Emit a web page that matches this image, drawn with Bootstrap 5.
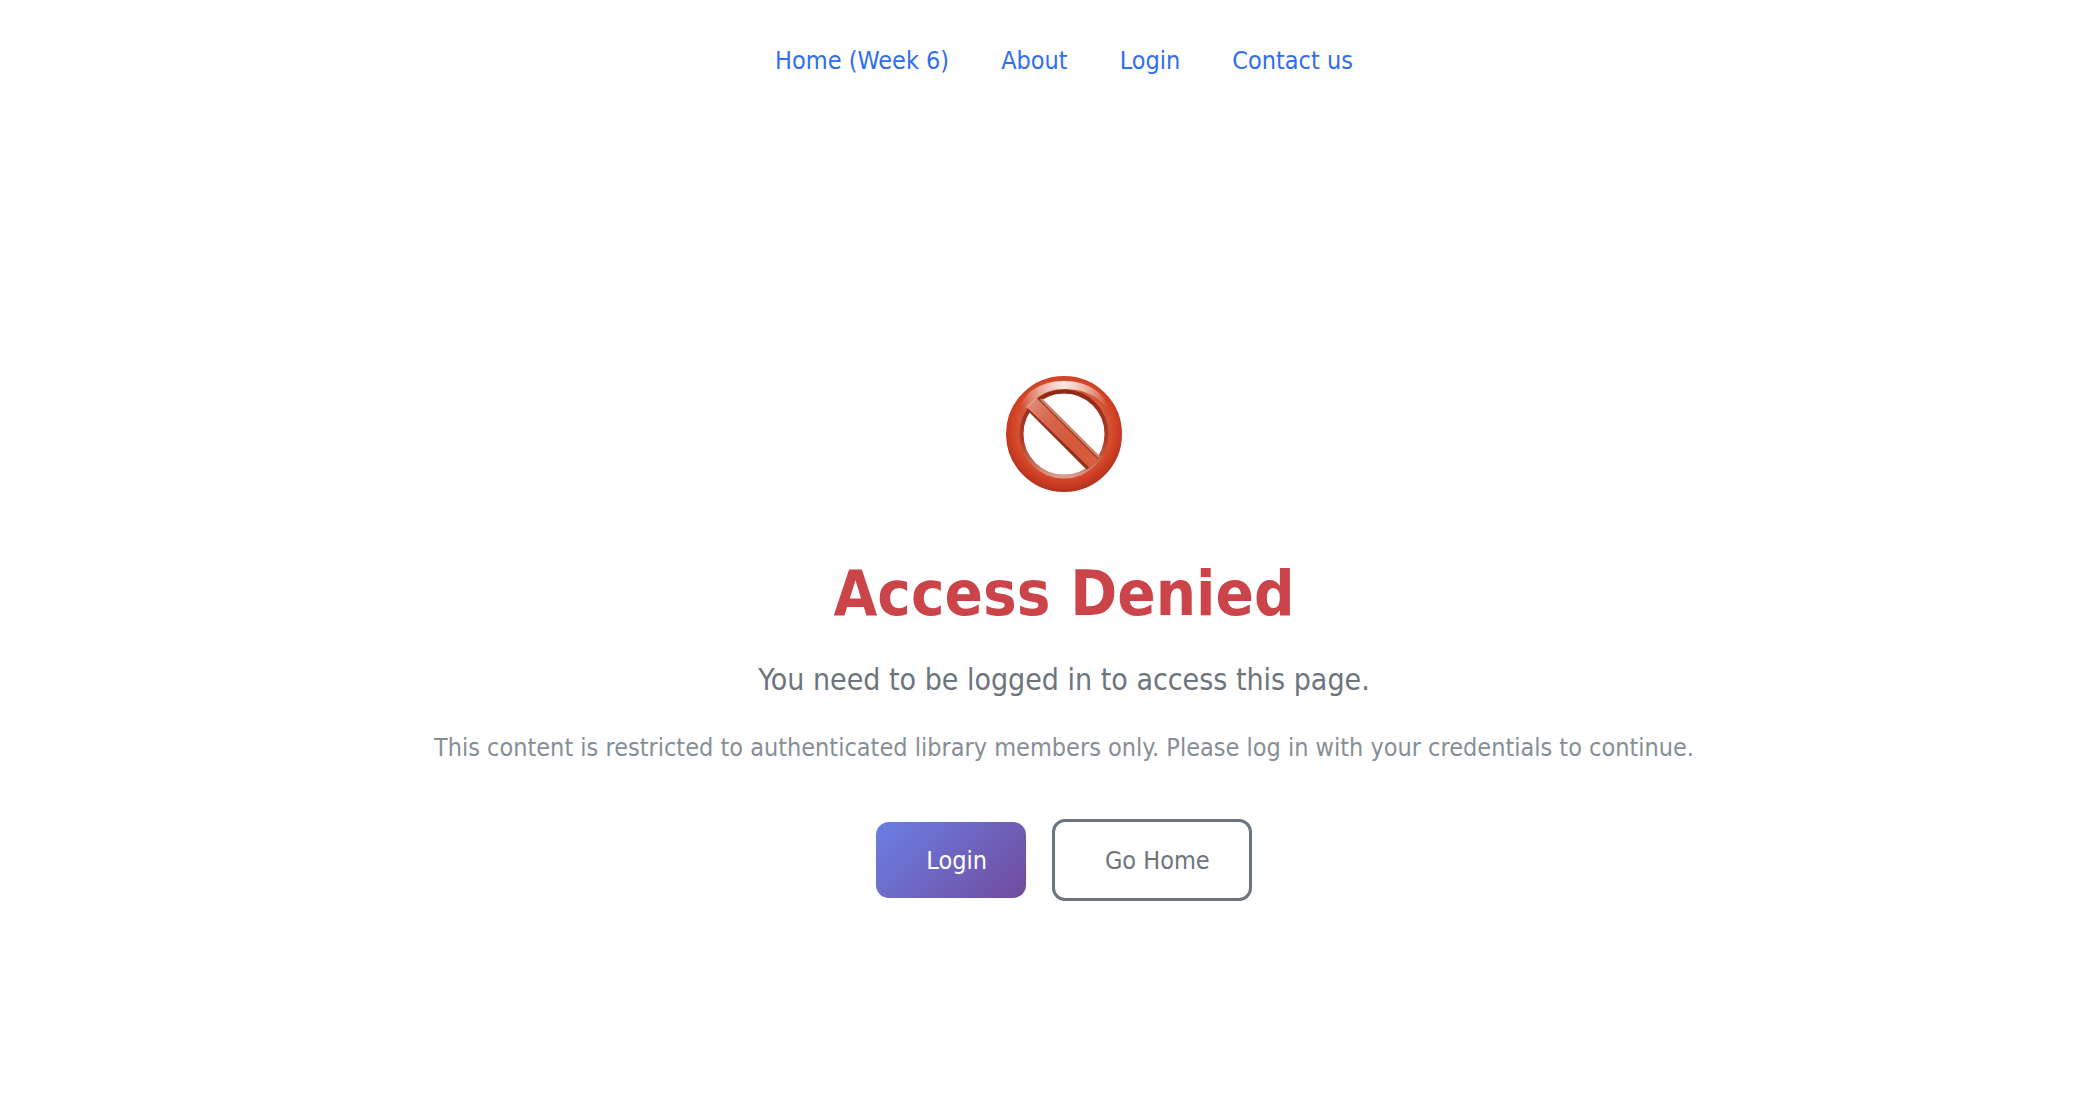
<!DOCTYPE html>
<html lang="en">
<head>
<meta charset="utf-8">
<meta name="viewport" content="width=device-width, initial-scale=1">
<title>Access Denied</title>
<link href="https://cdn.jsdelivr.net/npm/bootstrap@5.3.0/dist/css/bootstrap.min.css" rel="stylesheet">
<style>
  body {
    font-family: "DejaVu Sans Condensed", "DejaVu Sans", sans-serif;
    font-size: 25px;
    line-height: 40px;
    padding-left: 32px;
    background: #fff;
  }
  .site-nav { padding-top: 41px; }
  .site-nav .nav { column-gap: 52px; }
  .site-nav .nav-link { padding: 0; color: #2f6df2; }
  .denied { padding-top: 295px; }
  .denied-icon { width: 116px; height: 116px; }
  .denied-title {
    margin: 62px 0 26px;
    font-size: 63px;
    line-height: 80px;
    font-weight: 700;
    color: #cb444a;
  }
  .denied-lead { margin-bottom: 28px; font-size: 30px; color: #6c757d; }
  .denied-note { margin-bottom: 51px; color: #868e96; }
  .denied-actions { gap: 26px; }
  .denied-actions .btn {
    padding: 19px 39px 17px 50px;
    border: 0;
    border-radius: 13px;
    font-size: 25px;
    line-height: 40px;
  }
  .denied-actions .btn-login { color: #fff; background: linear-gradient(135deg, #6a7fe4, #714b9c); }
  .denied-actions .btn-home { border: 3px solid #6c757d; color: #6c757d; }
</style>
</head>
<body>
<header class="site-nav">
  <nav aria-label="Main">
    <ul class="nav justify-content-center">
      <li class="nav-item"><a class="nav-link" href="#home">Home (Week 6)</a></li>
      <li class="nav-item"><a class="nav-link" href="#about">About</a></li>
      <li class="nav-item"><a class="nav-link" href="#login">Login</a></li>
      <li class="nav-item"><a class="nav-link" href="#contact">Contact us</a></li>
    </ul>
  </nav>
</header>
<main class="denied text-center">
  <svg class="denied-icon d-block mx-auto" viewBox="-58 -58 116 116" aria-hidden="true">
    <defs>
      <radialGradient id="ring" gradientUnits="userSpaceOnUse" cx="0" cy="-5" r="65">
        <stop offset=".65" stop-color="#d55a3b"/><stop offset=".8" stop-color="#d34226"/><stop offset="1" stop-color="#ab2f1a"/>
      </radialGradient>
      <linearGradient id="bevel" x1="0" y1="0" x2="0" y2="1">
        <stop offset="0" stop-color="#8f2a16"/><stop offset=".6" stop-color="#b23f27"/><stop offset=".88" stop-color="#c9745f"/><stop offset="1" stop-color="#dc9e90"/>
      </linearGradient>
      <linearGradient id="slash" gradientUnits="userSpaceOnUse" x1="-34" y1="-34" x2="30" y2="30">
        <stop offset="0" stop-color="#e08d7a"/><stop offset=".3" stop-color="#d7664b"/><stop offset=".7" stop-color="#d4583a"/><stop offset="1" stop-color="#d95f40"/>
      </linearGradient>
      <radialGradient id="shine" gradientUnits="userSpaceOnUse" cx="0" cy="-52" r="50">
        <stop offset="0" stop-color="#fff" stop-opacity=".9"/><stop offset=".5" stop-color="#fff" stop-opacity=".52"/><stop offset="1" stop-color="#fff" stop-opacity="0"/>
      </radialGradient>
      <clipPath id="hole"><circle r="42"/></clipPath>
    </defs>
    <circle r="49.5" fill="none" stroke="url(#ring)" stroke-width="17"/>
    <circle r="42.5" fill="none" stroke="url(#bevel)" stroke-width="4"/>
    <g clip-path="url(#hole)">
      <path d="M-50-38-38-50 50 38 38 50Z" fill="#a8351e"/>
      <path d="M-38-50 50 38" stroke="#c98776" stroke-width="2.500"/>
      <path d="M-51-40 39 50" stroke="#94301b" stroke-width="3"/>
    </g>
    <path d="M-38-27.5-27.5-36 34 25.500 26 34Z" fill="url(#slash)"/>
    <path d="M-46-20C-43-41-24-53 0-53S43-41 46-20C38-37 21-45 0-45-10-45-20-42-27-36L-36-27C-40-25-44-23-46-20Z" fill="url(#shine)"/>
  </svg>
  <h1 class="denied-title">Access Denied</h1>
  <p class="denied-lead">You need to be logged in to access this page.</p>
  <p class="denied-note">This content is restricted to authenticated library members only. Please log in with your credentials to continue.</p>
  <div class="denied-actions d-flex justify-content-center align-items-center">
    <a class="btn btn-login" href="#login">Login</a>
    <a class="btn btn-home" href="#home">Go Home</a>
  </div>
</main>
<script src="https://cdn.jsdelivr.net/npm/bootstrap@5.3.0/dist/js/bootstrap.bundle.min.js"></script>
</body>
</html>
